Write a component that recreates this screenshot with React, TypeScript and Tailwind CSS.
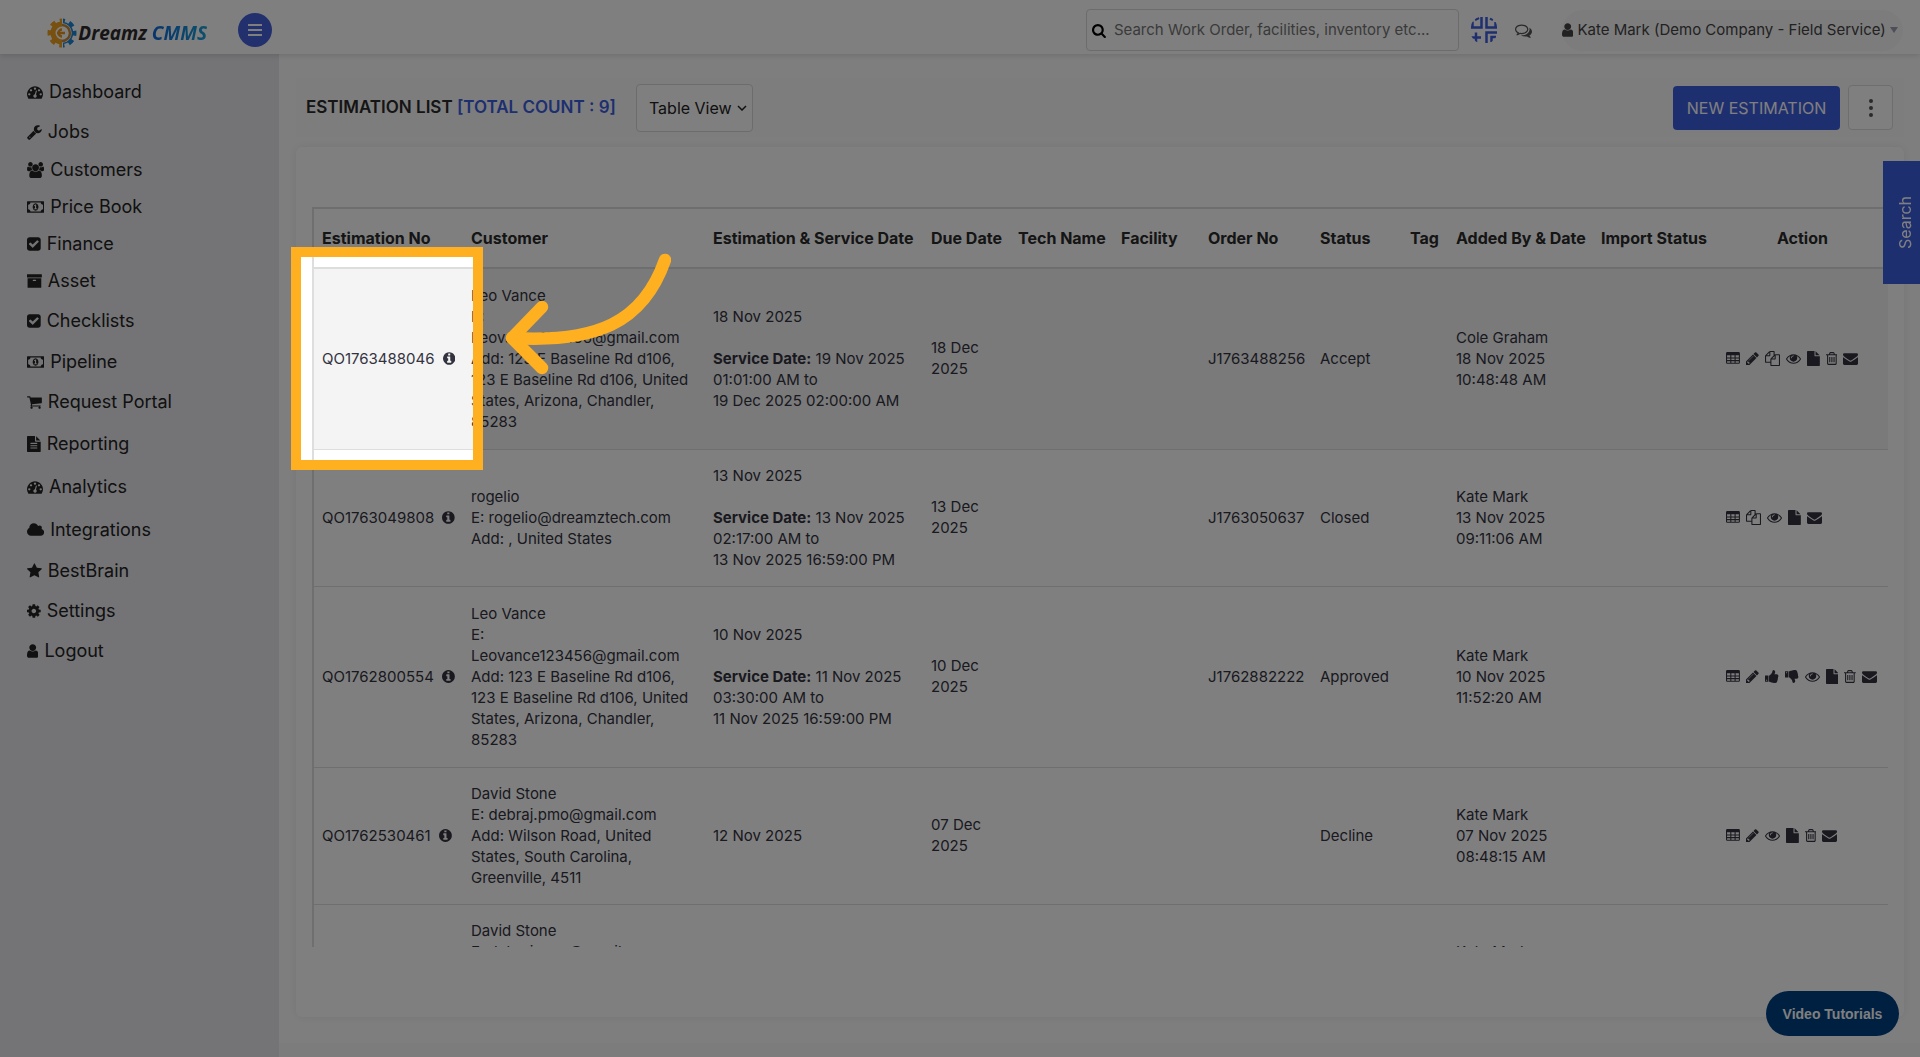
import type { ReactNode } from "react";

type Glyph = { box: string; d: string };

const glyphs = {
  dashboard: {
    box: "0 0 1792 1792",
    d: "M384 1152q0-53-37.500-90.500t-90.500-37.500-90.500 37.500-37.500 90.500 37.500 90.500 90.500 37.500 90.500-37.500 37.500-90.500zm192-448q0-53-37.500-90.500t-90.500-37.500-90.500 37.500-37.500 90.500 37.500 90.500 90.500 37.500 90.500-37.500 37.500-90.500zm428 481l101-382q6-26-7.500-48.500t-38.500-29.500-48 6.500-30 39.500l-101 382q-60 5-107 43.500t-63 98.500q-20 77 20 146t117 89 146-20 89-117q16-60-6-117t-72-91zm660-33q0-53-37.500-90.500t-90.500-37.500-90.500 37.500-37.500 90.500 37.500 90.500 90.500 37.500 90.500-37.500 37.500-90.500zm-640-640q0-53-37.500-90.500t-90.500-37.500-90.500 37.500-37.500 90.500 37.500 90.500 90.500 37.500 90.500-37.500 37.500-90.500zm448 192q0-53-37.500-90.500t-90.500-37.500-90.500 37.500-37.500 90.500 37.500 90.500 90.500 37.500 90.500-37.500 37.500-90.500zm320 448q0 261-141 483-19 29-54 29h-1402q-35 0-54-29-141-221-141-483 0-182 71-348t191-286 286-191 348-71 348 71 286 191 191 286 71 348z",
  },
  wrench: {
    box: "64 0 1664 1792",
    d: "M448 1472q0-26-19-45t-45-19-45 19-19 45 19 45 45 19 45-19 19-45zm644-420l-682 682q-37 37-90 37-52 0-91-37l-106-108q-38-36-38-90 0-53 38-91l681-681q39 98 114.500 173.500t173.500 114.500zm634-435q0 39-23 106-47 134-164.500 217.500t-258.500 83.500q-185 0-316.500-131.500t-131.500-316.500 131.500-316.500 316.500-131.500q58 0 121.500 16.500t107.500 46.500q16 11 16 28t-16 28l-293 169v224l193 107q5-3 79-48.500t135.500-81 70.500-35.500q15 0 23.500 10t8.500 25z",
  },
  users: {
    box: "0 0 1920 1792",
    d: "M593 896q-162 5-265 128h-134q-82 0-138-40.500t-56-118.500q0-353 124-353 6 0 43.500 21t97.500 42.500 119 21.500q67 0 133-23-5 37-5 66 0 139 81 256zm1071 637q0 120-73 189.500t-194 69.500h-874q-121 0-194-69.500t-73-189.500q0-53 3.500-103.500t14-109 26.500-108.500 43-97.500 62-81 85.500-53.500 111.500-20q10 0 43 21.500t73 48 107 48 135 21.500 135-21.500 107-48 73-48 43-21.500q61 0 111.500 20t85.500 53.500 62 81 43 97.500 26.500 108.500 14 109 3.500 103.500zm-1024-1277q0 106-75 181t-181 75-181-75-75-181 75-181 181-75 181 75 75 181zm704 384q0 159-112.500 271.500t-271.500 112.500-271.500-112.500-112.500-271.500 112.500-271.500 271.500-112.500 271.500 112.500 112.500 271.500zm576 225q0 78-56 118.500t-138 40.500h-134q-103-123-265-128 81-117 81-256 0-29-5-66 66 23 133 23 59 0 119-21.500t97.500-42.500 43.500-21q124 0 124 353zm-128-609q0 106-75 181t-181 75-181-75-75-181 75-181 181-75 181 75 75 181z",
  },
  money: {
    box: "0 0 1920 1792",
    d: "M768 1152h384v-96h-128v-448h-114l-148 137 77 80q42-37 55-57h2v288h-128v96zm512-256q0 70-21 142t-59.500 134-101.500 101-138 39-138-39-101.500-101-59.500-134-21-142 21-142 59.500-134 101.500-101 138-39 138 39 101.500 101 59.500 134 21 142zm512 256v-512q-106 0-181-75t-75-181h-1152q0 106-75 181t-181 75v512q106 0 181 75t75 181h1152q0-106 75-181t181-75zm128-832v1152q0 26-19 45t-45 19h-1792q-26 0-45-19t-19-45v-1152q0-26 19-45t45-19h1792q26 0 45 19t19 45z",
  },
  check: {
    box: "128 0 1536 1792",
    d: "M813 1299l614-614q19-19 19-45t-19-45l-102-102q-19-19-45-19t-45 19l-467 467-211-211q-19-19-45-19t-45 19l-102 102q-19 19-19 45t19 45l358 358q19 19 45 19t45-19zm851-883v960q0 119-84.500 203.500t-203.500 84.500h-960q-119 0-203.500-84.500t-84.500-203.500v-960q0-119 84.500-203.500t203.500-84.500h960q119 0 203.500 84.500t84.500 203.500z",
  },
  archive: {
    box: "64 0 1664 1792",
    d: "M1088 832q0-26-19-45t-45-19h-256q-26 0-45 19t-19 45 19 45 45 19h256q26 0 45-19t19-45zm576-192v960q0 26-19 45t-45 19h-1408q-26 0-45-19t-19-45v-960q0-26 19-45t45-19h1408q26 0 45 19t19 45zm64-448v256q0 26-19 45t-45 19h-1536q-26 0-45-19t-19-45v-256q0-26 19-45t45-19h1536q26 0 45 19t19 45z",
  },
  cart: {
    box: "64 0 1664 1792",
    d: "M704 1536q0 52-38 90t-90 38-90-38-38-90 38-90 90-38 90 38 38 90zm896 0q0 52-38 90t-90 38-90-38-38-90 38-90 90-38 90 38 38 90zm128-1088v512q0 24-16.500 42.500t-40.500 21.500l-1044 122q13 60 13 70 0 16-24 64h920q26 0 45 19t19 45-19 45-45 19h-1024q-26 0-45-19t-19-45q0-11 8-31.500t16-36 21.500-40 15.500-29.500l-177-823h-204q-26 0-45-19t-19-45 19-45 45-19h256q16 0 28.500 6.500t19.500 15.500 13 24.500 8 26 5.500 29.500 4.500 26h1201q26 0 45 19t19 45z",
  },
  fileText: {
    box: "128 0 1536 1792",
    d: "M1596 476q14 14 28 36h-472v-472q22 14 36 28zm-476 164h544v1056q0 40-28 68t-68 28h-1344q-40 0-68-28t-28-68v-1600q0-40 28-68t68-28h800v544q0 40 28 68t68 28zm160 736v-64q0-14-9-23t-23-9h-704q-14 0-23 9t-9 23v64q0 14 9 23t23 9h704q14 0 23-9t9-23zm0-256v-64q0-14-9-23t-23-9h-704q-14 0-23 9t-9 23v64q0 14 9 23t23 9h704q14 0 23-9t9-23zm0-256v-64q0-14-9-23t-23-9h-704q-14 0-23 9t-9 23v64q0 14 9 23t23 9h704q14 0 23-9t9-23z",
  },
  cloud: {
    box: "64 0 1920 1792",
    d: "M1984 1152q0 159-112.500 271.500t-271.500 112.500h-1088q-185 0-316.500-131.500t-131.500-316.500q0-132 71-241.500t187-163.500q-2-28-2-43 0-212 150-362t362-150q158 0 286.500 88t187.500 230q70-62 166-62 106 0 181 75t75 181q0 75-41 138 129 30 213 134.500t84 239.500z",
  },
  star: {
    box: "64 0 1664 1792",
    d: "M1728 647q0 22-26 48l-363 354 86 500q1 7 1 20 0 21-10.500 35.500t-30.500 14.500q-19 0-40-12l-449-236-449 236q-22 12-40 12-21 0-31.500-14.500t-10.500-35.500q0-6 2-20l86-500-364-354q-25-27-25-48 0-37 56-46l502-73 225-455q19-41 49-41t49 41l225 455 502 73q56 9 56 46z",
  },
  cog: {
    box: "128 0 1536 1792",
    d: "M1152 896q0-106-75-181t-181-75-181 75-75 181 75 181 181 75 181-75 75-181zm512-109v222q0 12-8 23t-20 13l-185 28q-19 54-39 91 35 50 107 138 10 12 10 25t-9 23q-27 37-99 108t-94 71q-12 0-26-9l-138-108q-44 23-91 38-16 136-29 186-7 28-36 28h-222q-14 0-24.500-8.500t-11.500-21.500l-28-184q-49-16-90-37l-141 107q-10 9-25 9-14 0-25-11-126-114-165-168-7-10-7-23 0-12 8-23 15-21 51-66.500t54-70.500q-27-50-41-99l-183-27q-13-2-21-12.500t-8-23.500v-222q0-12 8-23t19-13l186-28q14-46 39-92-40-57-107-138-10-12-10-24 0-10 9-23 26-36 98.500-107.500t94.500-71.500q13 0 26 10l138 107q44-23 91-38 16-136 29-186 7-28 36-28h222q14 0 24.500 8.500t11.500 21.500l28 184q49 16 90 37l142-107q9-9 24-9 13 0 25 10 129 119 165 170 7 8 7 22 0 12-8 23-15 21-51 66.500t-54 70.500q26 50 41 98l183 28q13 2 21 12.500t8 23.500z",
  },
  user: {
    box: "256 0 1280 1792",
    d: "M1536 1399q0 109-62.500 187t-150.500 78h-854q-88 0-150.500-78t-62.500-187q0-85 8.500-160.500t31.500-152 58.500-131 94-89 134.500-34.500q131 128 313 128t313-128q76 0 134.500 34.500t94 89 58.500 131 31.500 152 8.500 160.500zm-256-887q0 159-112.500 271.500t-271.500 112.500-271.500-112.500-112.500-271.500 112.500-271.500 271.500-112.500 271.500 112.500 112.500 271.500z",
  },
  table: {
    box: "64 0 1664 1792",
    d: "M224 128h1344a160 160 0 0 1 160 160v1088a160 160 0 0 1-160 160h-1344a160 160 0 0 1-160-160v-1088a160 160 0 0 1 160-160zM192 512v256h384v-256zM704 512v256h384v-256zM1216 512v256h384v-256zM192 896v192h384v-192zM704 896v192h384v-192zM1216 896v192h384v-192zM192 1216v192h384v-192zM704 1216v192h384v-192zM1216 1216v192h384v-192z",
  },
  pencil: {
    box: "128 0 1536 1792",
    d: "M491 1536l91-91-235-235-91 91v107h128v128h107zm523-928q0-22-22-22-10 0-17 7l-542 542q-7 7-7 17 0 22 22 22 10 0 17-7l542-542q7-7 7-17zm-54-192l416 416-832 832h-416v-416zm683 96q0 53-37 90l-166 166-416-416 166-165q36-38 90-38 53 0 91 38l235 234q37 39 37 91z",
  },
  copy: {
    box: "0 0 1792 1792",
    d: "M1696 384q40 0 68 28t28 68v1216q0 40-28 68t-68 28h-960q-40 0-68-28t-28-68v-288h-544q-40 0-68-28t-28-68v-672q0-40 20-88t48-76l408-408q28-28 76-48t88-20h416q40 0 68 28t28 68v328q68-40 128-40h416zm-544 213l-299 299h299v-299zm-640-384l-299 299h299v-299zm196 647l316-316v-416h-384v416q0 40-28 68t-68 28h-416v640h512v-256q0-40 20-88t48-76zm956 804v-1152h-384v416q0 40-28 68t-68 28h-416v640h896z",
  },
  eye: {
    box: "0 0 1792 1792",
    d: "M1664 960q-152-236-381-353 61 104 61 225 0 185-131.500 316.500t-316.500 131.500-316.500-131.500-131.500-316.500q0-121 61-225-229 117-381 353 133 205 333.500 326.500t434.500 121.500 434.500-121.500 333.500-326.500zm-720-384q0-20-14-34t-34-14q-125 0-214.500 89.500t-89.500 214.500q0 20 14 34t34 14 34-14 14-34q0-86 61-147t147-61q20 0 34-14t14-34zm848 384q0 34-20 69-140 230-376.500 368.500t-499.500 138.500-499.500-139-376.500-368q-20-35-20-69t20-69q140-229 376.500-368t499.500-139 499.500 139 376.500 368q20 35 20 69z",
  },
  file: {
    box: "128 0 1536 1792",
    d: "M1152 512v-472q22 14 36 28l408 408q14 14 28 36h-472zm-128 32q0 40 28 68t68 28h544v1056q0 40-28 68t-68 28h-1344q-40 0-68-28t-28-68v-1600q0-40 28-68t68-28h800v544z",
  },
  trash: {
    box: "192 0 1408 1792",
    d: "M704 736v576q0 14-9 23t-23 9h-64q-14 0-23-9t-9-23v-576q0-14 9-23t23-9h64q14 0 23 9t9 23zm256 0v576q0 14-9 23t-23 9h-64q-14 0-23-9t-9-23v-576q0-14 9-23t23-9h64q14 0 23 9t9 23zm256 0v576q0 14-9 23t-23 9h-64q-14 0-23-9t-9-23v-576q0-14 9-23t23-9h64q14 0 23 9t9 23zm128 724v-948h-896v948q0 22 7 40.500t14.500 27 10.500 8.500h832q3 0 10.500-8.500t14.500-27 7-40.500zm-672-1076h448l-48-117q-7-9-17-11h-317q-10 2-17 11zm928 32v64q0 14-9 23t-23 9h-96v948q0 83-47 143.500t-113 60.500h-832q-66 0-113-58.500t-47-141.500v-952h-96q-14 0-23-9t-9-23v-64q0-14 9-23t23-9h309l70-167q15-37 54-63t79-26h320q40 0 79 26t54 63l70 167h309q14 0 23 9t9 23z",
  },
  mail: {
    box: "0 0 1792 1792",
    d: "M1792 710v794q0 66-47 113t-113 47h-1472q-66 0-113-47t-47-113v-794q44 49 101 87 362 246 497 345 57 42 92.500 65.500t94.500 48 110 24.500h2q51 0 110-24.500t94.500-48 92.500-65.500q170-123 498-345 57-39 100-87zm0-294q0 79-49 151t-122 123q-376 261-468 325-10 7-42.500 30.500t-54 38-52 32.500-57.500 27-50 9h-2q-23 0-50-9t-57.500-27-52-32.500-54-38-42.500-30.500q-91-64-262-182.500t-205-142.500q-62-42-117-115.500t-55-136.500q0-78 41.500-130t118.500-52h1472q65 0 112.500 47t47.500 113z",
  },
  info: {
    box: "128 0 1536 1792",
    d: "M1152 1376v-160q0-14-9-23t-23-9h-96v-512q0-14-9-23t-23-9h-320q-14 0-23 9t-9 23v160q0 14 9 23t23 9h96v320h-96q-14 0-23 9t-9 23v160q0 14 9 23t23 9h448q14 0 23-9t9-23zm-128-896v-160q0-14-9-23t-23-9h-192q-14 0-23 9t-9 23v160q0 14 9 23t23 9h192q14 0 23-9t9-23zm640 416q0 209-103 385.500t-279.500 279.500-385.500 103-385.500-103-279.500-279.500-103-385.500 103-385.500 279.500-279.500 385.500-103 385.500 103 279.500 279.500 103 385.500z",
  },
  search: {
    box: "64 0 1664 1792",
    d: "M1216 832q0-185-131.500-316.500t-316.500-131.500-316.500 131.500-131.500 316.500 131.500 316.500 316.500 131.500 316.500-131.500 131.500-316.500zm512 832q0 52-38 90t-90 38q-54 0-90-38l-343-342q-179 124-399 124-143 0-273.500-55.500t-225-150-150-225-55.500-273.500 55.500-273.500 150-225 225-150 273.500-55.500 273.500 55.500 225 150 150 225 55.500 273.500q0 220-124 399l343 343q37 37 37 90z",
  },
  thumb: {
    box: "64 0 1664 1792",
    d: "M320 1344q0-26-19-45t-45-19q-27 0-45.500 19t-18.500 45q0 27 18.500 45.500t45.500 18.500q26 0 45-18.500t19-45.500zm160-512v640q0 26-19 45t-45 19h-288q-26 0-45-19t-19-45v-640q0-26 19-45t45-19h288q26 0 45 19t19 45zm1184 0q0 86-55 149 15 44 15 76 3 76-43 137 17 56 0 117-15 57-54 94 9 112-49 181-64 76-197 78h-129q-66 0-144-15.500t-121.500-29-120.500-39.500q-123-43-158-44-26-1-45-19.500t-19-44.500v-641q0-25 18-43.500t43-20.500q24-2 76-59t101-121q68-87 101-120 18-18 31-48t17.500-48.500 13.500-60.500q7-39 12.500-61t19.500-52 34-50q19-19 45-19 46 0 82.500 10.500t60 26 40 40.500 24 45 12 50 5 45 .5 39q0 38-9.500 76t-19 60-27.500 56q-3 6-10 18t-11 22-8 24h277q78 0 135 57t57 135z",
  },
  comments: {
    box: "0 0 1792 1792",
    d: "M704 384q-153 0-286 52t-211.500 141-78.500 191q0 82 53 158t149 132l97 56-35 84q34-20 62-39l44-31 53 10q78 14 153 14 153 0 286-52t211.500-141 78.500-191-78.500-191-211.500-141-286-52zm0-128q191 0 353.500 68.500t256.500 186.500 94 257-94 257-256.500 186.500-353.500 68.500q-86 0-176-16-124 88-278 128-36 9-86 16h-3q-11 0-20.500-8t-11.500-21q-1-3-1-6.500t.5-6.500 2-6l2.500-5 3.500-5.500 4-5 4.500-5 4-4.500q5-6 23-25t26-29.500 22.500-29 25-38.500 20.500-44q-124-72-195-177t-71-224q0-139 94-257t256.500-186.500 353.500-68.500zm822 1169q10 24 20.500 44t25 38.500 22.500 29 26 29.500 23 25q1 1 4 4.500t4.500 5 4 5 3.500 5.500l2.500 5 2 6 .5 6.500-1 6.500q-3 14-13 22t-22 7q-50-7-86-16-154-40-278-128-90 16-176 16-271 0-472-132 58 4 88 4 161 0 309-45t264-129q125-92 192-212t67-254q0-77-23-152 129 71 204 178t75 230q0 120-71 224.500t-195 176.500z",
  },
} satisfies Record<string, Glyph>;

type GlyphName = keyof typeof glyphs;

function Icon({ name, className }: { name: GlyphName; className: string }) {
  const g = glyphs[name];
  return (
    <svg viewBox={g.box} className={className} fill="currentColor" fillRule="evenodd" aria-hidden="true">
      <path d={g.d} />
    </svg>
  );
}

const menu: { icon: GlyphName; label: string; height: string }[] = [
  { icon: "dashboard", label: "Dashboard", height: "h-[42px]" },
  { icon: "wrench", label: "Jobs", height: "h-[38px]" },
  { icon: "users", label: "Customers", height: "h-[37px]" },
  { icon: "money", label: "Price Book", height: "h-[37px]" },
  { icon: "check", label: "Finance", height: "h-[37px]" },
  { icon: "archive", label: "Asset", height: "h-[38px]" },
  { icon: "check", label: "Checklists", height: "h-[42px]" },
  { icon: "money", label: "Pipeline", height: "h-10" },
  { icon: "cart", label: "Request Portal", height: "h-10" },
  { icon: "fileText", label: "Reporting", height: "h-[43px]" },
  { icon: "dashboard", label: "Analytics", height: "h-[43px]" },
  { icon: "cloud", label: "Integrations", height: "h-[43px]" },
  { icon: "star", label: "BestBrain", height: "h-10" },
  { icon: "cog", label: "Settings", height: "h-10" },
  { icon: "user", label: "Logout", height: "h-10" },
];

type Action = "table" | "pencil" | "copy" | "up" | "down" | "eye" | "file" | "trash" | "mail";

const actionIcons: Record<Action, { icon: GlyphName; label: string }> = {
  table: { icon: "table", label: "Details" },
  pencil: { icon: "pencil", label: "Edit" },
  copy: { icon: "copy", label: "Copy" },
  up: { icon: "thumb", label: "Approve" },
  down: { icon: "thumb", label: "Decline" },
  eye: { icon: "eye", label: "View" },
  file: { icon: "file", label: "Document" },
  trash: { icon: "trash", label: "Delete" },
  mail: { icon: "mail", label: "Email" },
};

type Row = {
  no: string;
  customer: string[];
  date: string;
  service?: string[];
  due: string[];
  order?: string;
  status: string;
  added: string[];
  actions: Action[];
  tall?: boolean;
};

const leo = [
  "Leo Vance",
  "E:",
  "Leovance123456@gmail.com",
  "Add: 123 E Baseline Rd d106,",
  "123 E Baseline Rd d106, United",
  "States, Arizona, Chandler,",
  "85283",
];
const david = [
  "David Stone",
  "E: debraj.pmo@gmail.com",
  "Add: Wilson Road, United",
  "States, South Carolina,",
  "Greenville, 4511",
];

const rows: Row[] = [
  {
    no: "QO1763488046",
    customer: leo,
    date: "18 Nov 2025",
    service: ["19 Nov 2025", "01:01:00 AM to", "19 Dec 2025 02:00:00 AM"],
    due: ["18 Dec", "2025"],
    order: "J1763488256",
    status: "Accept",
    added: ["Cole Graham", "18 Nov 2025", "10:48:48 AM"],
    actions: ["table", "pencil", "copy", "eye", "file", "trash", "mail"],
    tall: true,
  },
  {
    no: "QO1763049808",
    customer: ["rogelio", "E: rogelio@dreamztech.com", "Add: , United States"],
    date: "13 Nov 2025",
    service: ["13 Nov 2025", "02:17:00 AM to", "13 Nov 2025 16:59:00 PM"],
    due: ["13 Dec", "2025"],
    order: "J1763050637",
    status: "Closed",
    added: ["Kate Mark", "13 Nov 2025", "09:11:06 AM"],
    actions: ["table", "copy", "eye", "file", "mail"],
  },
  {
    no: "QO1762800554",
    customer: leo,
    date: "10 Nov 2025",
    service: ["11 Nov 2025", "03:30:00 AM to", "11 Nov 2025 16:59:00 PM"],
    due: ["10 Dec", "2025"],
    order: "J1762882222",
    status: "Approved",
    added: ["Kate Mark", "10 Nov 2025", "11:52:20 AM"],
    actions: ["table", "pencil", "up", "down", "eye", "file", "trash", "mail"],
    tall: true,
  },
  {
    no: "QO1762530461",
    customer: david,
    date: "12 Nov 2025",
    due: ["07 Dec", "2025"],
    status: "Decline",
    added: ["Kate Mark", "07 Nov 2025", "08:48:15 AM"],
    actions: ["table", "pencil", "eye", "file", "trash", "mail"],
  },
  {
    no: "",
    customer: david,
    date: "",
    due: [],
    status: "",
    added: ["Kate Mark", "", ""],
    actions: [],
  },
];

const columns = [
  { label: "Estimation No", width: "w-[149px]" },
  { label: "Customer", width: "w-[242px]" },
  { label: "Estimation & Service Date", width: "w-[218px]" },
  { label: "Due Date", width: "w-[87px]" },
  { label: "Tech Name", width: "w-[103px]" },
  { label: "Facility", width: "w-[87px]" },
  { label: "Order No", width: "w-[112px]" },
  { label: "Status", width: "w-[90px]" },
  { label: "Tag", width: "w-[46px]" },
  { label: "Added By & Date", width: "w-[145px]" },
  { label: "Import Status", width: "w-[123px]" },
  { label: "Action", width: "w-[173px]" },
];

function Cell({ children }: { children?: ReactNode }) {
  return <td className="border-b border-[#dedede] px-2 pb-[2px] align-middle whitespace-nowrap">{children}</td>;
}

function Lines({ items }: { items: string[] }) {
  return items.map((line, i) => (
    <div key={i} className="min-h-[21px]">
      {line}
    </div>
  ));
}

function Logo() {
  return (
    <a href="#" className="flex w-[190px] items-center justify-end pt-[5px]">
      <svg viewBox="0 0 30 30" className="size-[30px] shrink-0" aria-hidden="true">
        <defs>
          <clipPath id="left">
            <rect width="15" height="30" />
          </clipPath>
          <clipPath id="right">
            <rect x="16" width="14" height="30" />
          </clipPath>
        </defs>
        <g clipPath="url(#left)" stroke="#f0a01e" fill="none">
          <circle cx="15" cy="15" r="9" strokeWidth="5" />
          <circle cx="15" cy="15" r="12.500" strokeWidth="4" strokeDasharray="5.200 4.610" strokeDashoffset="2.600" />
        </g>
        <g clipPath="url(#right)" stroke="#1c86d8" fill="none">
          <circle cx="15" cy="15" r="10.500" strokeWidth="1.500" />
          <circle cx="15" cy="15" r="12.500" strokeWidth="4" strokeDasharray="5.200 4.610" strokeDashoffset="2.600" />
        </g>
        <path d="M15 7a8 8 0 1 1 0 16" fill="none" stroke="#c98a3a" strokeWidth="2.500" />
        <path d="M10 15h8M15 11.500a3.500 3.500 0 0 0 0 7" fill="none" stroke="#e8961a" strokeWidth="2.500" />
      </svg>
      <span className="ml-px font-['Open_Sans'] text-[19px] leading-6 font-bold italic text-[#2e2a2c]">
        Dreamz{" "}
        <span className="bg-linear-to-r from-[#1268d8] to-[#1fa0d8] bg-clip-text text-transparent">CMMS</span>
      </span>
    </a>
  );
}

function Header() {
  return (
    <header className="relative z-10 flex h-[54px] items-center bg-white px-[17px] pt-[6px] shadow-[0_1px_6px_rgba(0,0,0,0.15)]">
      <Logo />
      <button
        type="button"
        aria-label="Toggle menu"
        className="ml-[31px] flex size-[34px] items-center justify-center rounded-full bg-[#4460dc]"
      >
        <svg viewBox="0 0 14 12" className="h-3 w-[14px]" aria-hidden="true">
          <path d="M0 1h14M0 6h14M0 11h14" stroke="#fff" strokeWidth="2" />
        </svg>
      </button>

      <label className="ml-auto flex h-[42px] w-[373px] items-center gap-2 rounded border border-[#d8d8d8] pl-[5px]">
        <Icon name="search" className="h-[15px] w-auto text-black" />
        <input
          type="text"
          aria-label="Search"
          placeholder="Search Work Order, facilities, inventory etc..."
          className="min-w-0 flex-1 bg-transparent text-[15px] outline-none placeholder:text-[#757575]"
        />
      </label>
      <button type="button" aria-label="Full screen" className="ml-3">
        <svg viewBox="0 0 26 26" className="size-[26px]" fill="none" stroke="#3d5ee1" aria-hidden="true">
          <clipPath id="round">
            <circle cx="13" cy="13" r="14" />
          </clipPath>
          <g clipPath="url(#round)" strokeWidth="2.500">
            <path d="M1.500 11V4.500M0 10.500h10.500V0M4 3l4-2" />
            <path d="M15.500 0v10.500H26M19 1.500l3 1.500M24.500 11V5" />
            <path d="M0 20.500h10M5 15.500v10" />
            <path d="M26 15.500H15.500V26M25 20h-4.500v5" />
          </g>
        </svg>
      </button>
      <button type="button" aria-label="Messages" className="ml-[18px]">
        <Icon name="comments" className="h-[17px] w-auto text-[#555]" />
      </button>
      <button
        type="button"
        className="ml-[30px] flex h-[41px] w-[341px] items-center gap-1 rounded-full bg-[#f8f8f8] text-[15px] whitespace-nowrap text-[#444]"
      >
        <Icon name="user" className="h-4 w-auto shrink-0" />
        Kate Mark (Demo Company - Field Service)
        <svg viewBox="0 0 8 6" className="mr-2 ml-auto h-[6px] w-2 shrink-0" aria-hidden="true">
          <path d="M0 0h8L4 6z" fill="#9a9db0" />
        </svg>
      </button>
    </header>
  );
}

function Sidebar() {
  return (
    <nav className="w-[279px] shrink-0 bg-[#e8e8ec] pt-[17px]">
      {menu.map((item) => (
        <a
          key={item.label}
          href="#"
          className={`flex items-center gap-[6px] pl-[27px] text-lg text-[#222] ${item.height}`}
        >
          <Icon name={item.icon} className="h-4 w-auto" />
          {item.label}
        </a>
      ))}
    </nav>
  );
}

function Toolbar() {
  return (
    <div className="flex h-[59px] items-center bg-[#fbfbfb] pr-[11px] pl-[10px]">
      <h1 className="text-[17px] font-semibold text-[#2a2a2a]">
        ESTIMATION LIST <span className="text-[#3d5ee1]">[TOTAL COUNT : 9]</span>
      </h1>
      <div className="relative ml-5">
        <select
          aria-label="View"
          className="h-12 w-[117px] appearance-none rounded border border-[#d8d8d8] bg-white pl-3 text-base text-[#222]"
        >
          <option>Table View</option>
        </select>
        <svg viewBox="0 0 10 6" className="pointer-events-none absolute top-[21px] right-[6px] h-[6px] w-[10px]" aria-hidden="true">
          <path d="M1 1l4 4 4-4" fill="none" stroke="#222" strokeWidth="1.500" />
        </svg>
      </div>
      <button
        type="button"
        className="ml-auto h-11 w-[167px] rounded bg-[#3d5ee1] text-base text-white"
      >
        NEW ESTIMATION
      </button>
      <button
        type="button"
        aria-label="More"
        className="ml-2 flex size-[45px] items-center justify-center rounded border border-[#dcdcdc] bg-white"
      >
        <svg viewBox="0 0 4 18" className="h-[18px] w-1" fill="#555" aria-hidden="true">
          <circle cx="2" cy="2" r="2" />
          <circle cx="2" cy="9" r="2" />
          <circle cx="2" cy="16" r="2" />
        </svg>
      </button>
    </div>
  );
}

function EstimationTable() {
  return (
    <div className="h-[calc(100vh-317px)] overflow-hidden border-l-2 border-[#dedede]">
      <table className="w-full table-fixed border-separate border-spacing-0 text-[15px] leading-[21px] text-[#33333f]">
        <thead>
          <tr>
            {columns.map((col) => (
              <th
                key={col.label}
                scope="col"
                className={`h-[62px] border-y-2 border-[#dcdddd] px-2 text-left text-base font-bold whitespace-nowrap text-[#2a2a2a] last:text-center ${col.width}`}
              >
                {col.label}
              </th>
            ))}
          </tr>
        </thead>
        <tbody>
          {rows.map((row, i) => (
            <tr key={i} className={`${row.tall ? "h-[181px]" : "h-[137px]"} ${i === 0 ? "bg-[#f4f4f4]" : ""}`}>
              <Cell>
                {row.no && (
                  <span className="flex items-center gap-2">
                    {row.no}
                    <Icon name="info" className="h-[15px] w-auto" />
                  </span>
                )}
              </Cell>
              <Cell>
                <Lines items={row.customer} />
              </Cell>
              <Cell>
                {row.date}
                {row.service && (
                  <>
                    <br />
                    <br />
                    <b>Service Date:</b> <span>{row.service[0]}</span>
                    <Lines items={row.service.slice(1)} />
                  </>
                )}
              </Cell>
              <Cell>
                <Lines items={row.due} />
              </Cell>
              <Cell />
              <Cell />
              <Cell>{row.order}</Cell>
              <Cell>{row.status}</Cell>
              <Cell />
              <Cell>
                <Lines items={row.added} />
              </Cell>
              <Cell />
              <Cell>
                <div className="flex items-center gap-[6px] pl-[2px]">
                  {row.actions.map((a) => (
                    <button key={a} type="button" aria-label={actionIcons[a].label}>
                      <Icon
                        name={actionIcons[a].icon}
                        className={a === "down" ? "h-[15px] w-auto -scale-y-100" : "h-[15px] w-auto"}
                      />
                    </button>
                  ))}
                </div>
              </Cell>
            </tr>
          ))}
        </tbody>
      </table>
    </div>
  );
}

// Tutorial highlight: everything outside the framed cell is dimmed by the spread shadow.
function Spotlight() {
  return (
    <div className="pointer-events-none absolute inset-0 z-30 overflow-hidden">
      <div className="absolute top-[247px] left-[291px] h-[223px] w-[192px] border-10 border-[#ffb020] shadow-[0_0_0_2000px_rgba(0,0,0,0.5)]" />
      <svg
        viewBox="0 0 170 130"
        className="absolute top-[248px] left-[501px] h-[130px] w-[170px]"
        fill="none"
        stroke="#ffb020"
        strokeWidth="12.500"
        strokeLinecap="round"
        strokeLinejoin="round"
        aria-hidden="true"
      >
        <path d="M164 12C142 75 95 95 11 90" />
        <path d="M41 59L11 90l30 30" />
      </svg>
    </div>
  );
}

export default function App() {
  return (
    <div className="relative flex min-h-screen flex-col overflow-hidden bg-[#fdfdfd] font-[Inter,sans-serif]">
      <Header />
      <div className="flex flex-1">
        <Sidebar />
        <div className="flex min-w-0 flex-1 flex-col">
          <main className="flex-1 pt-6 pr-4 pl-[17px]">
            <Toolbar />
            <section className="mt-[10px] rounded-md bg-white px-4 pt-[60px] pb-[70px] shadow-[0_0_10px_rgba(0,0,0,0.08)]">
              <EstimationTable />
            </section>
          </main>
          <footer className="h-[14px] bg-[#f8f8f8]" />
        </div>
      </div>

      <button
        type="button"
        className="absolute top-[161px] right-0 z-20 flex h-[123px] w-[37px] items-center justify-center bg-[#3d5ee1] pl-[6px] text-base text-white"
      >
        <span className="rotate-180 [writing-mode:vertical-rl]">Search</span>
      </button>
      <button
        type="button"
        className="fixed right-[21px] bottom-[21px] z-20 h-[45px] w-[133px] rounded-full bg-[#004085] font-['Liberation_Sans',sans-serif] text-sm font-bold text-white"
      >
        Video Tutorials
      </button>
      <Spotlight />
    </div>
  );
}
